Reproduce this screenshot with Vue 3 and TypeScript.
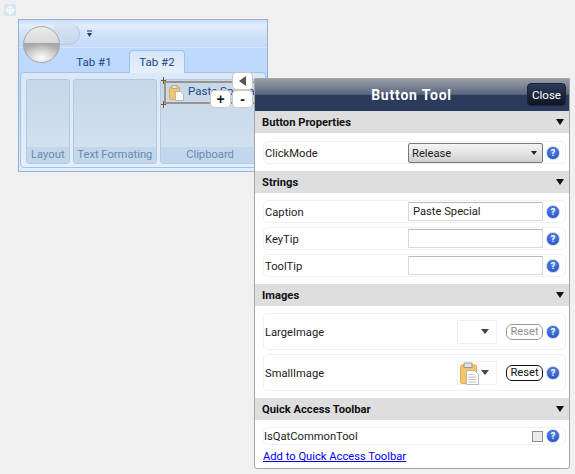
<script setup lang="ts">
const stringRows = [
  { label: 'Caption', value: 'Paste Special' },
  { label: 'KeyTip', value: '' },
  { label: 'ToolTip', value: '' },
]
const groups = [
  { label: 'Layout', cls: 'g-layout' },
  { label: 'Text Formating', cls: 'g-text' },
  { label: 'Clipboard', cls: 'g-clip' },
]
</script>

<template>
  <div class="page">
    <svg class="move-handle" width="12" height="12" viewBox="0 0 12 12">
      <rect width="12" height="12" rx="2" fill="#d5e3f1" />
      <circle cx="6" cy="6" r="3" fill="none" stroke="#fff" stroke-width="1.2" />
      <path d="M6 1v10M1 6h10" stroke="#fff" stroke-width="1" />
    </svg>

    <div class="ribbon">
      <div class="qat">
        <div class="qat-tail" />
        <svg class="qat-more" width="7" height="8" viewBox="0 0 7 8">
          <path d="M1 1h5" stroke="#1f3a70" stroke-width="1" />
          <path d="M1 3h5L3.5 7z" fill="#1f3a70" />
        </svg>
      </div>
      <div class="app-button" />
      <div class="tabs">
        <span class="tab">Tab #1</span>
        <span class="tab active">Tab #2</span>
      </div>
      <div class="tab-body">
        <div v-for="g in groups" :key="g.label" class="group" :class="g.cls">
          <div class="group-main" />
          <div class="group-label">{{ g.label }}</div>
        </div>
      </div>

      <div class="selected-tool">
        <svg class="selected-icon" width="15" height="16" viewBox="0 0 15 16">
          <rect x="0.5" y="2" width="10" height="12.5" rx="1" fill="#f3c56f" stroke="#e0ab55" />
          <rect x="3" y="0.5" width="5" height="3" fill="#e3e3da" stroke="#9a9a8c" stroke-width="0.7" />
          <path d="M6.5 6.5h5l3 3v6h-8z" fill="#fafafa" stroke="#a9adb5" stroke-width="0.8" />
        </svg>
        <span class="selected-text">Paste Special</span>
      </div>
      <i class="tick t1" /><i class="tick t2" />
      <button class="adorner a-left"><span class="left-arrow" /></button>
      <button class="adorner a-plus">+</button>
      <button class="adorner a-minus">-</button>
    </div>

    <div class="panel">
      <div class="panel-head">
        <span class="panel-title">Button Tool</span>
        <button class="close">Close</button>
      </div>

      <div class="section-head">Button Properties<span class="chev" /></div>
      <div class="section-body">
        <div class="row">
          <span class="row-label">ClickMode</span>
          <div class="select">Release<span class="select-arrow" /></div>
          <span class="help">?</span>
        </div>
      </div>

      <div class="section-head">Strings<span class="chev" /></div>
      <div class="section-body strings">
        <div v-for="r in stringRows" :key="r.label" class="row">
          <span class="row-label">{{ r.label }}</span>
          <div class="input">{{ r.value }}</div>
          <span class="help">?</span>
        </div>
      </div>

      <div class="section-head">Images<span class="chev" /></div>
      <div class="section-body images">
        <div class="row tall">
          <span class="row-label">LargeImage</span>
          <div class="picker"><span class="picker-arrow" /></div>
          <button class="reset off">Reset</button>
          <span class="help">?</span>
        </div>
        <div class="row tall">
          <span class="row-label">SmallImage</span>
          <div class="picker">
            <svg class="picker-icon" width="19" height="23" viewBox="0 0 19 23">
              <rect x="0.5" y="3" width="16" height="18.5" rx="1.5" fill="#f5c46c" stroke="#e0ab55" />
              <rect x="4" y="1" width="8" height="4.5" fill="#e3e3da" stroke="#8e8e82" stroke-width="0.8" />
              <path d="M6.5 8.5h8l4 4v10h-12z" fill="#fbfbfb" stroke="#a6abb3" stroke-width="0.8" />
              <path d="M8.5 12.5h5M8.5 15h8M8.5 17.5h8M8.5 20h8" stroke="#b4bac4" stroke-width="0.8" />
            </svg>
            <span class="picker-arrow" />
          </div>
          <button class="reset">Reset</button>
          <span class="help">?</span>
        </div>
      </div>

      <div class="section-head">Quick Access Toolbar<span class="chev" /></div>
      <div class="section-body qat-body">
        <div class="row short">
          <span class="row-label flush">IsQatCommonTool</span>
          <span class="check" />
          <span class="help">?</span>
        </div>
        <a class="add-link" href="#">Add to Quick Access Toolbar</a>
      </div>
    </div>
  </div>
</template>

<style>
body {
  margin: 0;
  background: #f0f0f0;
}
</style>

<style scoped>
.page {
  position: relative;
  width: 575px;
  height: 474px;
  overflow: hidden;
  background: #f0f0f0;
  font-family: Roboto, "Noto Sans", sans-serif;
  font-size: 11.2px;
  color: #1c1c1c;
}

.move-handle {
  position: absolute;
  left: 4px;
  top: 4px;
}

.ribbon {
  position: absolute;
  left: 18px;
  top: 19px;
  width: 250px;
  height: 153px;
  box-sizing: border-box;
  border: 1px solid #95b1d4;
  background: linear-gradient(#bfdafc, #bcd9fc 30%, #bcd9fc 50%, #dff0fe 100%);
}

.qat {
  height: 27px;
  border-bottom: 1px solid #d7e7fb;
  background: linear-gradient(#c9ddf6, #e2eefc 20%, #d3e4f9 45%, #c3dafa);
  display: flex;
  align-items: flex-start;
  padding-left: 35px;
}

.qat-tail {
  width: 26px;
  height: 22px;
  margin-top: 3px;
  box-sizing: border-box;
  border: 1px solid #b4cae5;
  border-left: none;
  border-top-color: #d3e2f3;
  border-radius: 0 14px 14px 4px;
  background: linear-gradient(#d9e5f3, #c5d8ef);
}

.qat-more {
  margin: 10px 0 0 6px;
}

.app-button {
  position: absolute;
  left: 4px;
  top: 6px;
  width: 37px;
  height: 37px;
  box-sizing: border-box;
  border-radius: 50%;
  border: 1.5px solid #a8a6a2;
  background:
    radial-gradient(ellipse 55% 40% at 50% 88%, #fbfbfb, transparent),
    linear-gradient(#ececec, #d9d9d9 46%, #a6a6a6 47%, #c9c9c9 100%);
}

.tabs {
  display: flex;
  height: 25px;
  padding: 2px 0 0 47px;
  box-sizing: border-box;
  position: relative;
  z-index: 1;
  margin-bottom: -1px;
}

.tab {
  width: 56px;
  margin-right: 7px;
  text-align: center;
  line-height: 24px;
  color: #234585;
  font-size: 11.5px;
  box-sizing: border-box;
}

.tab.active {
  border: 1px solid #9fc3ea;
  border-bottom: none;
  border-radius: 4px 4px 0 0;
  background: linear-gradient(#d6e6f8, #e6f0fb);
  line-height: 22px;
}

.tab-body {
  margin: 0 1px;
  height: 96px;
  box-sizing: border-box;
  border: 1px solid #a0c2e8;
  border-radius: 4px;
  background: linear-gradient(#dbe8f7, #e4eef9);
  padding: 6px 5px 2px;
  display: flex;
  gap: 3px;
}

.group {
  display: flex;
  flex-direction: column;
  box-sizing: border-box;
  height: 85px;
  border: 1px solid #b0c8e2;
  border-radius: 3px;
  background: linear-gradient(#c6d7e9, #d5e2f0);
  overflow: hidden;
}

.g-layout { width: 44px; }
.g-text { width: 85px; }
.g-clip { width: 100px; flex: none; }

.group-main {
  flex: 1;
}

.group-label {
  height: 16px;
  line-height: 16px;
  text-align: center;
  background: #c3d7ec;
  color: #6a89ad;
  white-space: nowrap;
}

.selected-tool {
  position: absolute;
  left: 145px;
  top: 61px;
  width: 92px;
  height: 23px;
  box-sizing: border-box;
  border: 2px solid #9a948c;
  display: flex;
  align-items: center;
  gap: 4px;
  padding-left: 3px;
  white-space: nowrap;
  overflow: hidden;
  color: #234585;
  font-size: 11.5px;
}

.selected-icon {
  flex: none;
}

.selected-text {
  line-height: 16px;
  margin-top: -4px;
}

.tick {
  position: absolute;
  left: 142px;
  width: 5px;
  height: 7px;
  background:
    linear-gradient(#7d5a2a, #7d5a2a) center / 1px 100% no-repeat,
    linear-gradient(#7d5a2a, #7d5a2a) center / 100% 1px no-repeat;
}

.t1 { top: 57px; }
.t2 { top: 81px; }

.adorner {
  position: absolute;
  width: 21px;
  height: 18px;
  padding: 0;
  border: 1px solid #c9c9c9;
  border-radius: 4px;
  background: #fff;
  font: 700 14px/14px "Liberation Sans", sans-serif;
  color: #1a1a1a;
  display: flex;
  align-items: center;
  justify-content: center;
}

.a-left { left: 213px; top: 52px; }
.a-plus { left: 191px; top: 70px; }
.a-minus { left: 213px; top: 70px; }

.left-arrow {
  width: 0;
  height: 0;
  border-top: 5px solid transparent;
  border-bottom: 5px solid transparent;
  border-right: 7px solid #555;
}

.panel {
  position: absolute;
  left: 254px;
  top: 78px;
  width: 316px;
  height: 391px;
  box-sizing: border-box;
  border: 1px solid #a4a4a4;
  border-radius: 0 0 3px 3px;
  background: #fff;
  overflow: hidden;
}

.panel-head {
  height: 32px;
  position: relative;
  display: flex;
  align-items: center;
  justify-content: center;
  background: linear-gradient(#9a9da6, #5a6680 48%, #2b3b5c 50%, #2b3b5c);
}

.panel-title {
  color: #fff;
  font-weight: 700;
  font-size: 14px;
  letter-spacing: 0.8px;
  margin-left: -1px;
}

.close {
  position: absolute;
  right: 3px;
  top: 4px;
  width: 39px;
  height: 23px;
  padding: 0;
  border: 1px solid #1a2438;
  border-radius: 4px;
  background: linear-gradient(#2d3b57, #0f1523);
  color: #fff;
  font: 11.5px Roboto, sans-serif;
}

.section-head {
  height: 22px;
  line-height: 24px;
  padding-left: 7px;
  position: relative;
  background: #dedede;
  font-weight: 700;
  color: #111;
}

.chev {
  position: absolute;
  right: 5px;
  top: 8px;
  width: 0;
  height: 0;
  border-left: 4.5px solid transparent;
  border-right: 4.5px solid transparent;
  border-top: 6px solid #111;
}

.section-body {
  padding: 8px 3px 7px 8px;
  display: flex;
  flex-direction: column;
  gap: 4px;
}

.section-body.strings {
  padding-top: 7px;
}

.section-body.images {
  padding-top: 7px;
  padding-bottom: 7px;
}

.qat-body {
  padding-top: 7px;
  padding-bottom: 0;
}

.row {
  height: 23px;
  box-sizing: border-box;
  border: 1px solid #f0f0f0;
  border-radius: 5px;
  display: flex;
  align-items: center;
  padding-right: 5px;
}

.row.tall {
  height: 37px;
}

.row.short {
  height: 18px;
}

.row-label {
  flex: 1;
  padding: 1px 0 0 1px;
}

.row-label.flush {
  padding-left: 0;
}

.select {
  width: 135px;
  height: 20px;
  box-sizing: border-box;
  border: 1px solid #777;
  border-radius: 2px;
  background: linear-gradient(#f4f4f4, #e4e4e4 50%, #cfcfcf);
  padding-left: 3px;
  line-height: 19px;
  position: relative;
}

.select-arrow {
  position: absolute;
  right: 5px;
  top: 7px;
  width: 0;
  height: 0;
  border-left: 3.5px solid transparent;
  border-right: 3.5px solid transparent;
  border-top: 4px solid #222;
}

.input {
  width: 135px;
  height: 19px;
  box-sizing: border-box;
  border: 1px solid #d5d9e0;
  border-top-color: #b6b9c0;
  padding-left: 4px;
  line-height: 18px;
}

.help {
  width: 12px;
  height: 12px;
  margin-left: 3px;
  border-radius: 50%;
  border: 1px solid #c8d8f2;
  background: radial-gradient(circle at 50% 35%, #5d88e6, #1645bf);
  color: #fff;
  font-size: 9px;
  font-weight: 700;
  line-height: 12px;
  text-align: center;
  flex: none;
}

.picker {
  width: 40px;
  height: 24px;
  box-sizing: border-box;
  border: 1px solid #f0f0f0;
  position: relative;
  margin-right: 9px;
}

.picker-icon {
  position: absolute;
  left: 2px;
  top: 0;
}

.picker-arrow {
  position: absolute;
  right: 7px;
  top: 8px;
  width: 0;
  height: 0;
  border-left: 4px solid transparent;
  border-right: 4px solid transparent;
  border-top: 5px solid #444;
}

.reset {
  width: 37px;
  height: 16px;
  padding: 0;
  border: 1px solid #111;
  border-radius: 6px;
  background: #fff;
  color: #111;
  font: 11.2px/14px Roboto, sans-serif;
}

.reset.off {
  border-color: #999;
  color: #8e8e8e;
}

.check {
  width: 11px;
  height: 11px;
  box-sizing: border-box;
  border: 1px solid #8f8f8f;
  background: #eaeaea;
}

.add-link {
  color: #0000ee;
  text-decoration: underline;
  line-height: 14px;
  margin-top: 1px;
}
</style>
